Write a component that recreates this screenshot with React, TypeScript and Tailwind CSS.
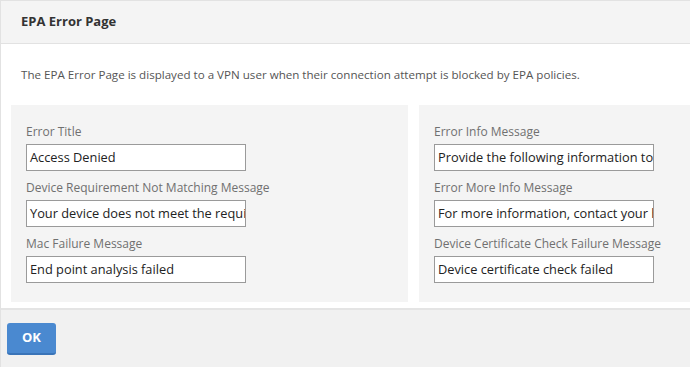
import React from "react";

const Field = ({ label, value }: { label: string; value: string }) => (
  <div className="flex flex-col">
    <div className="text-[12px] leading-[16px] text-[#707070] h-[16px]">{label}</div>
    <div className="mt-[4px] h-[27px] w-[220px] border border-[#9a9a9a] bg-white px-[3px] flex items-center overflow-hidden whitespace-nowrap text-[12.8px] text-[#222]">
      {value}
    </div>
  </div>
);

export default function App() {
  return (
    <div
      className="w-[690px] h-[367px] overflow-hidden bg-white flex flex-col border-l border-t border-[#e2e2e2]"
      style={{ fontFamily: '"Open Sans", "Liberation Sans", sans-serif' }}
    >
      <div className="h-[43px] shrink-0 bg-[#f4f4f4] border-b border-[#e2e2e2] flex items-center pl-[20px]">
        <span className="text-[13px] font-bold text-[#333]">EPA Error Page</span>
      </div>
      <div className="h-[264px] shrink-0 flex flex-col">
        <div className="pl-[20px] pt-[23px] h-[61px] text-[11.6px] leading-[16px] text-[#555]">
          The EPA Error Page is displayed to a VPN user when their connection attempt is blocked by EPA policies.
        </div>
        <div className="flex gap-[11px] pl-[10px]">
          <div className="w-[397px] h-[197px] bg-[#f4f4f4] pl-[15px] pt-[19px] flex flex-col gap-[9px]">
            <Field label="Error Title" value="Access Denied" />
            <Field label="Device Requirement Not Matching Message" value="Your device does not meet the requirements" />
            <Field label="Mac Failure Message" value="End point analysis failed" />
          </div>
          <div className="flex-1 h-[197px] bg-[#f4f4f4] pl-[15px] pt-[19px] flex flex-col gap-[9px]">
            <Field label="Error Info Message" value="Provide the following information to your administrator" />
            <Field label="Error More Info Message" value="For more information, contact your help desk" />
            <Field label="Device Certificate Check Failure Message" value="Device certificate check failed" />
          </div>
        </div>
      </div>
      <div className="flex-1 bg-[#f1f1f1] border-t-2 border-[#e4e4e4] pl-[6px] pt-[13px]">
        <button className="w-[49px] h-[32px] rounded-[3px] bg-[#4a89d0] border-b-2 border-[#3a74b8] text-white text-[13px] font-bold">
          OK
        </button>
      </div>
    </div>
  );
}
